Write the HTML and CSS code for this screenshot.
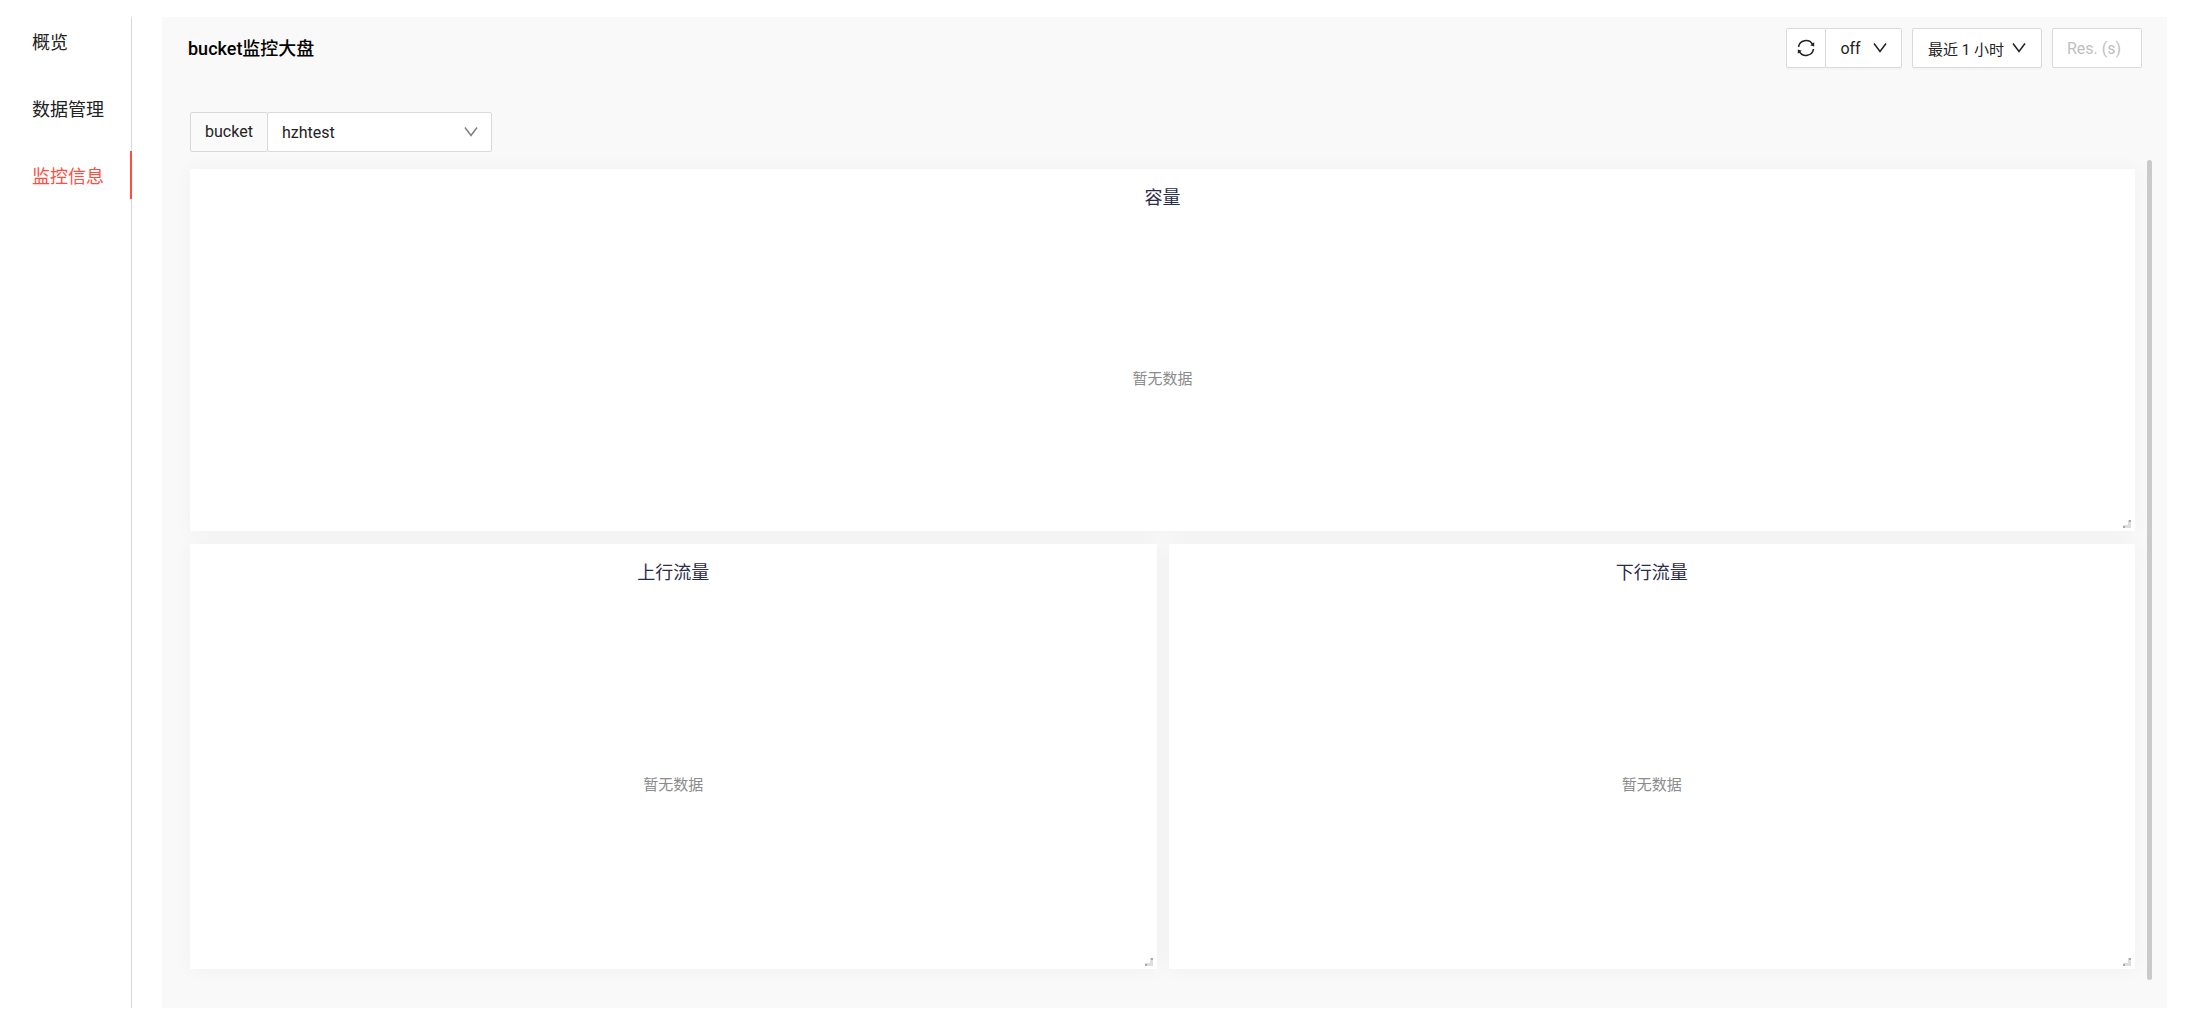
FILE: index.html
```html
<!DOCTYPE html>
<html lang="zh-CN">
<head>
  <meta charset="UTF-8" />
  <meta name="viewport" content="width=device-width, initial-scale=1.0" />
  <title>bucket监控大盘</title>
  <link rel="stylesheet" href="styles.css">
</head>
<body>
  <div class="layout">
    <nav class="sidebar">
      <a href="#overview" class="menu-item">概览</a>
      <a href="#data" class="menu-item">数据管理</a>
      <a href="#monitor" class="menu-item active">监控信息</a>
    </nav>

    <main class="panel">
      <header class="toolbar">
        <h1 class="title">bucket监控大盘</h1>
        <div class="controls">
          <div class="btn-group">
            <button type="button" class="btn btn-icon" aria-label="刷新">
              <svg class="icon-refresh" viewBox="0 0 18 18" aria-hidden="true">
                <path class="line" d="M1.5 8A7.6 7.6 0 0 1 15.6 5.4M16.5 10A7.6 7.6 0 0 1 2.4 12.6" />
                <path class="tip" d="M17.2 3.2V7.4L13.2 6.3ZM0.8 14.8V10.6L4.8 11.7Z" />
              </svg>
            </button>
            <button type="button" class="btn btn-off">off
              <svg class="chevron" viewBox="0 0 14 10" aria-hidden="true"><path d="M1 0.5L7 8.5L13 0.5" /></svg>
            </button>
          </div>
          <button type="button" class="btn btn-time">最近 1 小时
            <svg class="chevron" viewBox="0 0 14 10" aria-hidden="true"><path d="M1 0.5L7 8.5L13 0.5" /></svg>
          </button>
          <input type="text" class="res-input" placeholder="Res. (s)" aria-label="Res. (s)" />
        </div>
      </header>

      <div class="filter">
        <label for="bucket" class="filter-label">bucket</label>
        <div class="select-box">
          <select id="bucket" class="filter-select">
            <option>hzhtest</option>
          </select>
          <svg class="chevron select-arrow" viewBox="0 0 14 10" aria-hidden="true"><path d="M1 0.5L7 8.5L13 0.5" /></svg>
        </div>
      </div>

      <div class="board">
        <div class="grid">
          <section class="card wide">
            <h2 class="card-title">容量</h2>
            <p class="empty">暂无数据</p>
            <svg class="resize" viewBox="0 0 8 8" aria-hidden="true"><path class="edge" d="M5 0H8V8H0V5H5Z" /><path class="dot" d="M6 0H8V2H6ZM0 6H2V8H0Z" /></svg>
          </section>
          <section class="card">
            <h2 class="card-title">上行流量</h2>
            <p class="empty">暂无数据</p>
            <svg class="resize" viewBox="0 0 8 8" aria-hidden="true"><path class="edge" d="M5 0H8V8H0V5H5Z" /><path class="dot" d="M6 0H8V2H6ZM0 6H2V8H0Z" /></svg>
          </section>
          <section class="card">
            <h2 class="card-title">下行流量</h2>
            <p class="empty">暂无数据</p>
            <svg class="resize" viewBox="0 0 8 8" aria-hidden="true"><path class="edge" d="M5 0H8V8H0V5H5Z" /><path class="dot" d="M6 0H8V2H6ZM0 6H2V8H0Z" /></svg>
          </section>
        </div>
        <div class="scrollbar"></div>
      </div>
    </main>
  </div>
</body>
</html>
```

FILE: styles.css
```css
* {
  box-sizing: border-box;
}

body {
  margin: 0;
  background-color: #fff;
  color: #222;
  font-family: Roboto, "Noto Sans CJK SC", sans-serif;
  font-size: 15px;
}

.layout {
  display: flex;
  min-height: 100vh;
  padding: 17px 22px 3px 0;
}

/* left menu */
.sidebar {
  display: flex;
  flex-direction: column;
  gap: 19px;
  flex: 0 0 132px;
  margin-right: 30px;
  border-right: 1px solid #d9d9d9;
}

.menu-item {
  height: 48px;
  margin-right: -1px;
  padding-left: 32px;
  border-right: 2px solid transparent;
  color: #222;
  font-size: 18px;
  line-height: 52px;
  text-decoration: none;
}

.menu-item.active {
  border-right-color: #ff4d40;
  color: #ff4d40;
}

/* main panel */
.panel {
  flex: 1;
  min-width: 0;
  padding: 11px 15px 28px 26px;
  background-color: #f9f9f9;
}

.toolbar {
  display: flex;
  align-items: center;
  justify-content: space-between;
  height: 40px;
  padding-right: 10px;
}

.title {
  margin: 0;
  color: #000;
  font-size: 18px;
  font-weight: 500;
  line-height: 40px;
  padding-top: 2px;
}

.controls {
  display: flex;
  gap: 10px;
}

.btn-group {
  display: flex;
}

.btn,
.res-input,
.filter-label,
.filter-select {
  height: 40px;
  border: 1px solid #d9d9d9;
  border-radius: 2px;
  background-color: #fff;
  color: #222;
  font-family: inherit;
  font-size: 16px;
}

.btn {
  display: flex;
  align-items: center;
  justify-content: center;
  gap: 8px;
  padding: 0;
  box-shadow: 0 2px 0 rgba(0, 0, 0, 0.02);
  cursor: pointer;
}

.btn-icon {
  width: 40px;
}

.btn-off {
  width: 77px;
  margin-left: -1px;
  gap: 12px;
}

.btn-time {
  width: 130px;
  font-size: 15px;
}

.res-input {
  width: 90px;
  padding: 0 14px;
}

.res-input::placeholder {
  color: #bfbfbf;
}

.icon-refresh {
  width: 18px;
  height: 18px;
}

.icon-refresh .line {
  fill: none;
  stroke: #222;
  stroke-width: 1.6;
}

.icon-refresh .tip {
  fill: #222;
}

.chevron {
  flex: none;
  width: 14px;
  height: 10px;
  fill: none;
  stroke: #222;
  stroke-width: 1.5;
}

/* bucket filter */
.filter {
  display: flex;
  margin: 44px 0 8px 2px;
}

.filter-label {
  width: 78px;
  background-color: #fafafa;
  line-height: 38px;
  text-align: center;
}

.select-box {
  position: relative;
  width: 225px;
  margin-left: -1px;
}

.filter-select {
  width: 100%;
  padding: 0 14px;
  appearance: none;
}

.select-arrow {
  position: absolute;
  top: 15px;
  right: 14px;
  stroke: #808080;
  pointer-events: none;
}

/* charts */
.board {
  display: flex;
  gap: 12px;
}

.grid {
  display: grid;
  flex: 1;
  grid-template-columns: 1fr 1fr;
  gap: 13px 12px;
  padding: 9px 0 11px 2px;
}

.card {
  position: relative;
  display: flex;
  flex-direction: column;
  min-height: 425px;
  background-color: #fff;
  box-shadow: 0 0 20px rgba(0, 0, 0, 0.04);
}

.card.wide {
  grid-column: 1 / -1;
  min-height: 362px;
}

.card-title {
  margin: 0;
  padding-top: 4px;
  color: #2a2c4c;
  font-size: 18px;
  font-weight: 400;
  line-height: 50px;
  text-align: center;
}

.empty {
  display: flex;
  flex: 1;
  align-items: center;
  justify-content: center;
  margin: 0;
  color: #8c8c8c;
}

.resize {
  position: absolute;
  right: 4px;
  bottom: 3px;
  width: 8px;
  height: 8px;
  cursor: se-resize;
}

.resize .edge {
  fill: #ddd;
}

.resize .dot {
  fill: #aaa;
}

.scrollbar {
  width: 5px;
  border-radius: 3px;
  background-color: #cacaca;
}
```
